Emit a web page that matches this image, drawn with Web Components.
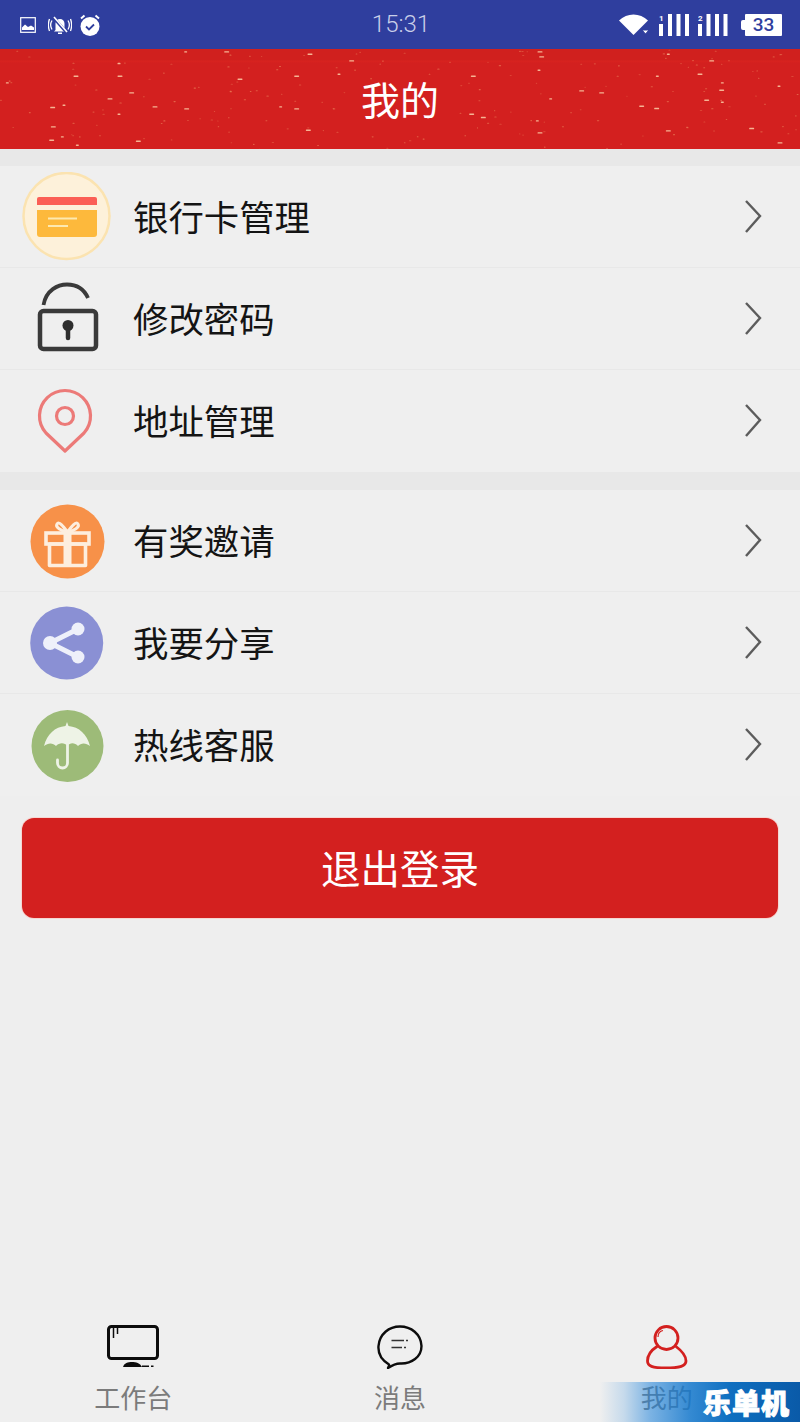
<!DOCTYPE html>
<html lang="zh"><head><meta charset="utf-8"><title>我的</title>
<style>
html,body{margin:0;padding:0}
body{width:800px;height:1422px;background:#eeeeee;font-family:"Noto Sans CJK SC","Noto Sans",sans-serif;overflow:hidden}
svg{display:block}
</style></head><body>
<template id="t-shell"><style>
:host{display:flex;flex-direction:column;width:800px;height:1422px;position:relative;overflow:hidden;background:#eeeeee}
</style><slot></slot></template>

<template id="t-status"><style>
:host{display:grid;grid-template-columns:1fr auto 1fr;align-items:center;height:49px;background:#2f3e9e;color:#fff;box-sizing:border-box;padding:0 18px 0 20px}
.l,.r{display:flex;align-items:center}
.l{gap:9px}.r{justify-content:flex-end;gap:9px}
.t{font:300 24px/49px Roboto,sans-serif;color:#c9cfe9;padding-bottom:1px;box-sizing:border-box}
</style>
<div class="l"><slot name="left"></slot></div><div class="t"><slot name="time"></slot></div><div class="r"><slot name="right"></slot></div></template>

<template id="t-header"><style>
:host{display:flex;position:relative;height:100px;box-sizing:border-box;padding-bottom:3px;align-items:center;justify-content:center;background:linear-gradient(#d0201e 0,#d0201e 11px,#d8231f 12px,#d3201f 14px);color:#fff;font-size:39px;overflow:hidden}
svg{position:absolute;left:0;top:0}
span{position:relative}
</style><svg id="s" width="800" height="100"></svg><span><slot></slot></span></template>

<template id="t-group"><style>
:host{display:block;border-top:17px solid #e8e8e8}
:host([second]){border-top-width:18px}
</style><slot></slot></template>

<template id="t-row"><style>
:host{display:flex;align-items:center;height:102px;box-sizing:border-box;padding:0 38px 0 22px;gap:21px;border-bottom:1px solid #e8e8e8;font-size:35.4px;color:#141414;background:#efefef}
:host([last]){border-bottom:0}
.i{width:90px;height:90px;flex:none}
.x{flex:1;line-height:40px;padding-bottom:2px}
</style><div class="i"><slot name="icon"></slot></div><div class="x"><slot></slot></div>
<svg width="18" height="36" viewBox="0 0 18 36" style="display:block"><path d="M2 2 L16 17 L2 33" fill="none" stroke="#5c5c5c" stroke-width="2.400"/></svg></template>

<template id="t-button"><style>
:host{display:flex;align-items:center;justify-content:center;height:100px;box-sizing:border-box;padding-bottom:4px;margin:22px 22px 0;border-radius:12px;background:#d3201f;color:#fff;font-size:39.5px;box-shadow:0 0 0 1px #f6d6d2}
</style><slot></slot></template>

<template id="t-tabs"><style>
:host{display:grid;grid-template-columns:repeat(3,1fr);height:112px;background:#efefef}
</style><slot></slot></template>

<template id="t-tab"><style>
:host{display:flex;flex-direction:column;align-items:center;color:#7b7b7b;font-size:26px}
.i{height:60px;margin-top:15px}
.x{line-height:36px;margin-top:-6px}
</style><div class="i"><slot name="icon"></slot></div><div class="x"><slot></slot></div></template>

<template id="t-mark"><style>
:host{display:flex;align-items:center;justify-content:flex-end;position:absolute;right:0;bottom:0;width:200px;height:40px;padding-right:10px;box-sizing:border-box;background:linear-gradient(90deg,rgba(34,134,222,0) 0,rgba(34,134,222,.2) 12%,rgba(30,130,218,.55) 25%,rgba(20,120,205,.85) 45%,#0f6fc0 65%,#0a5aa8 100%);color:#fff;font-size:28px;font-weight:900;letter-spacing:1px;-webkit-text-stroke:1px #fff;line-height:40px}
</style><slot></slot></template>

<app-shell>
<status-bar>
 <svg slot="left" width="16" height="16" viewBox="0 0 16 16" style="margin-right:3px"><rect x=".7" y=".7" width="14.6" height="14.6" fill="none" stroke="#fff" stroke-width="1.2"/><path d="M2 13V10.5L5 7.5 8 10l3-1.5 3 2V13Z" fill="#fff"/></svg>
 <svg slot="left" width="24" height="20" viewBox="0 0 24 20"><path d="M7.500 15V8.500a4.500 4.500 0 0 1 9 0V15l1.500 1.500H6Z M10 17.500h4v1.500h-4Z" fill="#fff"/><path d="M5 2 19 18" stroke="#2f3e9e" stroke-width="3"/><path d="M6 2 19 17" stroke="#fff" stroke-width="1.600"/><path d="M4 5.500C2.500 8 2.500 12 4 14.500M1.500 4C0 8 0 12 1.500 16M20 5.500c1.500 2.500 1.500 6.500 0 9M22.500 4c1.500 4 1.500 8 0 12" fill="none" stroke="#fff" stroke-width="1.300"/></svg>
 <svg slot="left" width="20" height="22" viewBox="0 0 20 22" style="margin-left:-1px"><circle cx="10" cy="12.500" r="9.500" fill="#fff"/><path d="M1 4.500 4.500 1.500M19 4.500 15.500 1.500" stroke="#fff" stroke-width="2"/><path d="M6 12.500l3 3 5-5" fill="none" stroke="#2f3e9e" stroke-width="1.800"/></svg>
 <span slot="time">15:31</span>
 <svg slot="right" width="31" height="22" viewBox="0 0 31 22"><path d="M0 6.500C8 -1.500 21 -1.500 29 6.500L14.500 21Z" fill="#fff"/><path d="M23 16h7l-3.500 4Z" fill="#fff" stroke="#2f3e9e" stroke-width="1"/></svg>
 <svg slot="right" width="30" height="24" viewBox="0 0 30 24" style="font:700 8px Roboto,sans-serif"><g fill="#fff"><rect x="0" y="11" width="4" height="12"/><rect x="9" y="1" width="4" height="22"/><rect x="17.500" y="1" width="4" height="22"/><rect x="26" y="1" width="4" height="22"/><text x="0" y="8">1</text></g></svg>
 <svg slot="right" width="30" height="24" viewBox="0 0 30 24" style="font:700 8px Roboto,sans-serif"><g fill="#fff"><rect x="0" y="11" width="4" height="12"/><rect x="8.500" y="1" width="4" height="22"/><rect x="17" y="1" width="4" height="22"/><rect x="25.500" y="1" width="4" height="22"/><text x="0" y="8">2</text></g></svg>
 <batt-icon slot="right" style="margin-left:4px">33</batt-icon>
</status-bar>
<page-header>我的</page-header>
<menu-group>
 <menu-row>
  <svg slot="icon" width="90" height="90" viewBox="0 0 90 90"><circle cx="44.500" cy="44" r="43" fill="#fdf1da" stroke="#fbe3b0" stroke-width="2.500"/><path d="M15 33V27a2 2 0 0 1 2-2H73a2 2 0 0 1 2 2V33Z" fill="#fb5f55"/><path d="M15 38H75V62a3 3 0 0 1-3 3H18a3 3 0 0 1-3-3Z" fill="#fdb93c"/><path d="M26 46.500H55M26 54H46" stroke="#fde9b0" stroke-width="2"/></svg>
  银行卡管理
 </menu-row>
 <menu-row>
  <svg slot="icon" width="90" height="90" viewBox="0 0 90 90"><rect x="18" y="37" width="56" height="38" rx="3.500" fill="none" stroke="#3a3a3a" stroke-width="4.500"/><path d="M21.500 31C24 16 36 10.500 45 10.500 54 10.500 62 15 66 24" fill="none" stroke="#3a3a3a" stroke-width="3.800"/><circle cx="46" cy="51.500" r="5.500" fill="#2e2e2e"/><path d="M46 52V64" stroke="#2e2e2e" stroke-width="4.500" stroke-linecap="round"/></svg>
  修改密码
 </menu-row>
 <menu-row last>
  <svg slot="icon" width="90" height="90" viewBox="0 0 90 90"><path d="M43 75 L24 57 A25.500 25.500 0 1 1 62 57 Z" fill="none" stroke="#ec7a78" stroke-width="3.200" stroke-linejoin="round"/><circle cx="43" cy="40" r="8.500" fill="none" stroke="#ec7a78" stroke-width="3.200"/></svg>
  地址管理
 </menu-row>
</menu-group>
<menu-group second>
 <menu-row>
  <svg slot="icon" width="90" height="90" viewBox="0 0 90 90"><circle cx="45.500" cy="45.500" r="37" fill="#f79149"/><g fill="none" stroke="#fdeede" stroke-width="3.600"><rect x="24" y="37" width="43" height="11"/><rect x="27.500" y="48" width="36" height="21.500" stroke-linejoin="round"/><path d="M45.500 36V70" stroke-width="8"/><path d="M45.500 36C41 30 37 25 35 28 33 31 39 35 45.500 36 52 35 58 31 56 28 54 25 50 30 45.500 36Z" stroke-width="3"/></g></svg>
  有奖邀请
 </menu-row>
 <menu-row>
  <svg slot="icon" width="90" height="90" viewBox="0 0 90 90"><circle cx="44.700" cy="45" r="36.500" fill="#8a90d4"/><g fill="#eef0fa" stroke="none"><path d="M28 45 56 31M28 45 56 59" stroke="#eef0fa" stroke-width="5" fill="none"/><circle cx="56" cy="31" r="6.500"/><circle cx="28" cy="45" r="7"/><circle cx="56" cy="59" r="6.500"/></g></svg>
  我要分享
 </menu-row>
 <menu-row last>
  <svg slot="icon" width="90" height="90" viewBox="0 0 90 90"><circle cx="45.500" cy="46" r="36" fill="#9dbb78"/><path d="M45 22 46.500 26C57 27 65 34 68 46 64 42.500 59 42.500 56 46 53 42.500 48 42 45.500 46 42.500 42 37 42.500 34 46 31 42.500 26 42.500 22 46 25 34 33 27 43.500 26Z" fill="#eef3e6"/><path d="M45.500 45V63A5 5 0 0 1 35.500 63V60" fill="none" stroke="#eef3e6" stroke-width="2.800" stroke-linecap="round"/></svg>
  热线客服
 </menu-row>
</menu-group>
<big-button>退出登录</big-button>
<flex-space></flex-space>
<tab-bar>
 <tab-item>
  <svg slot="icon" width="52" height="44" viewBox="0 0 52 44"><rect x="1.500" y="1.500" width="49" height="32" rx="3" fill="none" stroke="#0c0c0c" stroke-width="3"/><path d="M6.500 3V13M10.500 3V9" stroke="#0c0c0c" stroke-width="1.500"/><path d="M16 42C17 38 21 37 25 37 29 37 33 38 35 42Z" fill="#0c0c0c"/><path d="M35 41.300H42M44 41.300H46.500" stroke="#0c0c0c" stroke-width="1.500"/></svg>
  工作台
 </tab-item>
 <tab-item>
  <svg slot="icon" width="46" height="44" viewBox="0 0 46 44"><path d="M12 39.500C3 34 1 27 1.500 21 2.500 9 12 1.500 23 1.500 34 1.500 44 9 44.500 21 44.500 32 34.500 39 23 38.500 18 38.500 14 41 11 43 12 41 12.500 40 12 39.500Z" fill="none" stroke="#0c0c0c" stroke-width="2.400" stroke-linejoin="round"/><path d="M14.500 15.500H27M29 15.500H31M14.500 22.500H25M27 22.500H29" stroke="#333" stroke-width="1.500"/></svg>
  消息
 </tab-item>
 <tab-item>
  <svg slot="icon" width="42" height="44" viewBox="0 0 42 44"><circle cx="20.500" cy="13" r="11.500" fill="none" stroke="#d3201f" stroke-width="2.800"/><path d="M12 12C12 8 14.500 6 17 5.500" fill="none" stroke="#d3201f" stroke-width="1.200"/><path d="M11 21.500C4 26 1.500 31 1.500 36 1.500 41 6 43 20 43 34 43 40 41 40 36 40 31 36 26 30 21.500" fill="none" stroke="#d3201f" stroke-width="2.800" stroke-linecap="round"/></svg>
  我的
 </tab-item>
</tab-bar>
<water-mark>乐单机</water-mark>
</app-shell>

<script>
function simple(name,tid,extra){
  customElements.define(name,class extends HTMLElement{
    constructor(){super();this.attachShadow({mode:'open'}).appendChild(document.getElementById(tid).content.cloneNode(true));}
    connectedCallback(){if(extra)extra(this);}
  });
}
simple('status-bar','t-status');
simple('menu-group','t-group');
simple('menu-row','t-row');
simple('big-button','t-button');
simple('tab-bar','t-tabs');
simple('tab-item','t-tab');
simple('water-mark','t-mark');
simple('app-shell','t-shell');
customElements.define('flex-space',class extends HTMLElement{
  constructor(){super();this.attachShadow({mode:'open'}).innerHTML='<style>:host{display:block;flex:1}</style>';}
});
customElements.define('batt-icon',class extends HTMLElement{
  constructor(){super();this.attachShadow({mode:'open'}).innerHTML='<style>:host{display:flex;align-items:center;color:#2f3e9e;font:700 19px/22px Roboto,sans-serif}i{width:4px;height:10px;background:#fff;border-radius:2px 0 0 2px;display:block}b{display:flex;align-items:center;justify-content:center;width:37px;height:22px;background:#fff;font-weight:500;border-radius:1px}</style><i></i><b><slot></slot></b>';}
});
simple('page-header','t-header',function(el){
  var NS='http://www.w3.org/2000/svg',s=el.shadowRoot.getElementById('s');
  var b=[[360,190],[228,228],[360,228],[25,248],[395,278],[330,296],[360,342],[465,320],[560,326],[845,320],[890,326],[890,228],[1020,222],[1055,182],[930,162],[560,155],[680,155],[720,237],[190,410],[155,420],[415,423],[235,435],[925,390],[160,380],[195,315],[158,322]].map(function(p){return[p[0]/3,p[1]/3]});
  b=b.concat([[220,228],[420,210],[425,170],[420,155],[775,228],[900,222],[935,182],[808,162],[545,272],[605,278],[455,296],[725,318],[770,325],[970,306],[920,300],[965,270],[970,248],[215,342],[250,352],[415,362],[420,398],[805,392],[1140,258],[1055,385],[1140,428]].map(function(p){return[400+p[0]/3,p[1]/3]}));
  function add(x,y,w,h,c,o){var r=document.createElementNS(NS,'rect');r.setAttribute('x',x);r.setAttribute('y',y);r.setAttribute('width',w);r.setAttribute('height',h);r.setAttribute('fill',c);r.setAttribute('opacity',o);r.setAttribute('rx',.6);s.appendChild(r);}
  b.forEach(function(p,i){add(p[0]-2.500,p[1]-49-.5,i%3?5:3,1.400,'#ffd9b0',.8);});
  var z=12345;function R(){z=(z*1664525+1013904223)>>>0;return z/4294967296;}
  for(var i=0;i<190;i++){var x=R()*800,y=R()*100;if(x>350&&x<450&&y>30&&y<75)continue;add(x,y,1.2+R()*1.3,1.1,'#ee8a60',.3+R()*.35);}
});
</script>
</body></html>
